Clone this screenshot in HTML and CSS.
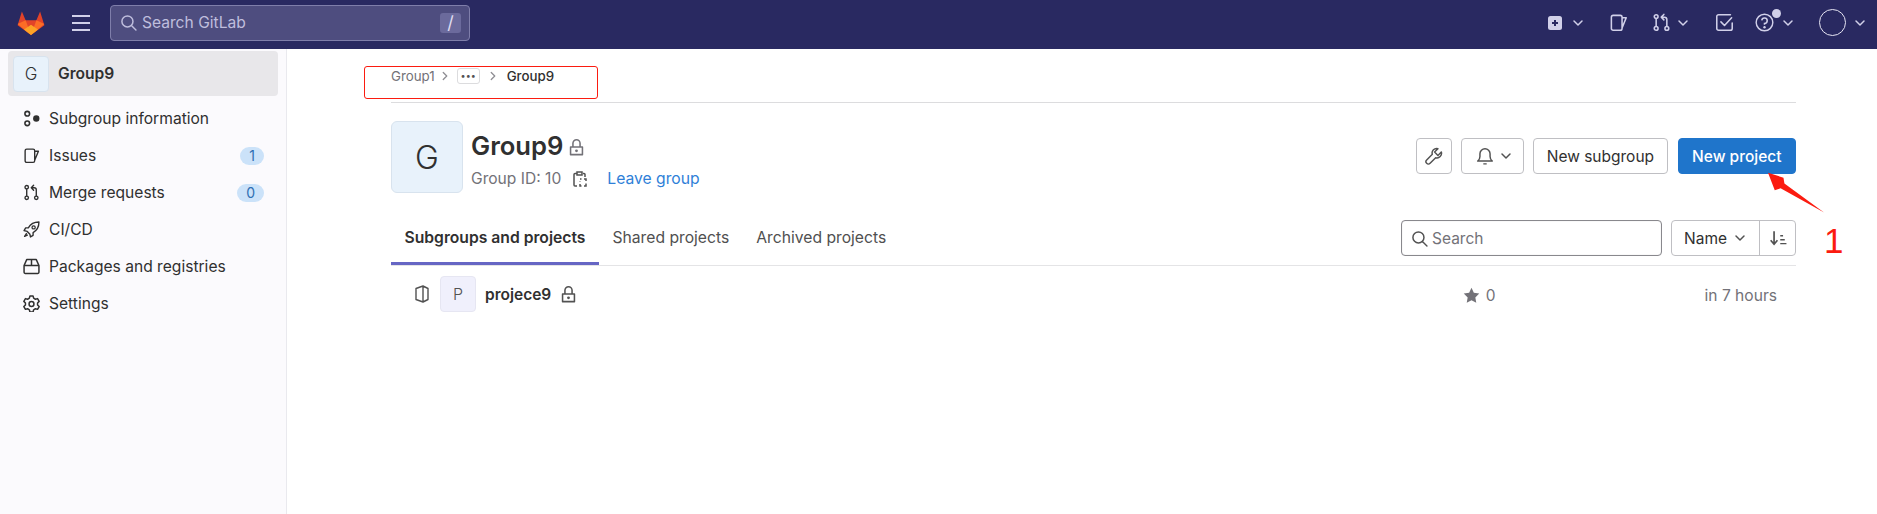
FILE: index.html
```html
<!DOCTYPE html>
<html lang="en">
<head>
<meta charset="utf-8">
<title>Group9</title>
<link rel="stylesheet" href="styles.css">
</head>
<body>
<svg class="defs" width="0" height="0" aria-hidden="true">
  <symbol id="chev" viewBox="0 0 16 16"><path d="M4 6l4 4 4-4" fill="none" stroke="currentColor" stroke-width="1.5" stroke-linecap="round" stroke-linejoin="round"/></symbol>
  <symbol id="issue" viewBox="0 0 16 16"><path d="M2 3.500A1.500 1.500 0 0 1 3.500 2h6A1.500 1.500 0 0 1 11 3.500V13a1.500 1.500 0 0 1-1.500 1.500h-6A1.500 1.500 0 0 1 2 13zM11 4h3.500L11 12.500" fill="none" stroke="currentColor" stroke-width="1.300" stroke-linejoin="round"/></symbol>
  <symbol id="merge" viewBox="0 0 16 16"><g fill="none" stroke="currentColor" stroke-width="1.300" stroke-linecap="round" stroke-linejoin="round"><circle cx="3.500" cy="3" r="1.600"/><circle cx="3.500" cy="13" r="1.600"/><circle cx="12.500" cy="13" r="1.600"/><path d="M3.500 5v6M12.500 11V5.500A2 2 0 0 0 10.500 3.500H8M10 1.200L7.800 3.500 10 5.800"/></g></symbol>
  <symbol id="lock" viewBox="0 0 16 16"><path d="M3 7.500h10v6.500H3zM5 7.500V4.500a3 3 0 0 1 6 0v3" fill="none" stroke="currentColor" stroke-width="1.300" stroke-linejoin="round"/><circle cx="8" cy="10.800" r="1.200" fill="currentColor"/></symbol>
  <symbol id="search" viewBox="0 0 16 16"><circle cx="7" cy="7" r="5.200" fill="none" stroke="currentColor" stroke-width="1.400"/><path d="M11 11l4 4" stroke="currentColor" stroke-width="1.400" stroke-linecap="round"/></symbol>
</svg>

<header class="topbar">
  <svg class="logo" viewBox="0 0 30 28" aria-label="GitLab">
    <path d="M15 27L.6 16.500 5.200 1.500 9.200 11h11.600L24.800 1.500 29.400 16.500z" fill="#e24329"/>
    <path d="M0.600 15.200L9.200 11 15 27z" fill="#fc6d26"/>
    <path d="M29.400 15.200L20.800 11 15 27z" fill="#fc6d26"/>
    <path d="M7.500 21L15 16l7.500 5L15 27z" fill="#fca326"/>
  </svg>
  <span class="burger"><i></i><i></i><i></i></span>
  <div class="globalsearch">
    <svg class="ic16"><use href="#search"/></svg>
    <span class="gs-text">Search GitLab</span>
    <kbd class="slash">/</kbd>
  </div>
  <nav class="topnav">
    <span class="tn tn-plus">
      <svg class="ic14" viewBox="0 0 14 14"><rect width="14" height="14" rx="2.500" fill="#d1d0e9"/><path d="M7 4v6M4 7h6" stroke="#292961" stroke-width="2"/></svg>
      <svg class="ic16"><use href="#chev"/></svg>
    </span>
    <span class="tn tn-issue"><svg class="ic16b"><use href="#issue"/></svg></span>
    <span class="tn tn-merge"><svg class="ic16b"><use href="#merge"/></svg><svg class="ic16"><use href="#chev"/></svg></span>
    <span class="tn tn-todo">
      <svg class="ic16b" viewBox="0 0 16 16"><path d="M14.500 8.500V13A1.500 1.500 0 0 1 13 14.500H3A1.500 1.500 0 0 1 1.500 13V3A1.500 1.500 0 0 1 3 1.500h10M5 7.500l3 3 6-6.500" fill="none" stroke="currentColor" stroke-width="1.300" stroke-linecap="round" stroke-linejoin="round"/></svg>
    </span>
    <span class="tn tn-help">
      <svg class="ic16b" viewBox="0 0 16 16"><circle cx="8" cy="8" r="7" fill="none" stroke="currentColor" stroke-width="1.200"/><path d="M5.700 6.200A2.300 2.300 0 1 1 8 8.800V9.800" fill="none" stroke="currentColor" stroke-width="1.300"/><circle cx="8" cy="12" r="1" fill="currentColor"/></svg>
      <i class="help-dot"></i>
      <svg class="ic16"><use href="#chev"/></svg>
    </span>
    <span class="tn tn-user"><i class="user-ring"></i><svg class="ic16"><use href="#chev"/></svg></span>
  </nav>
</header>

<div class="shell">
  <aside class="sidebar">
    <div class="ctx"><span class="ctx-av">G</span><strong>Group9</strong></div>
    <a class="sb"><svg class="sbi" viewBox="0 0 16 16"><g fill="none" stroke="currentColor" stroke-width="1.500"><circle cx="4" cy="3.500" r="2.200"/><circle cx="4" cy="12.500" r="2.200"/></g><circle cx="12.500" cy="8" r="3" fill="currentColor"/></svg><span class="sb-l">Subgroup information</span></a>
    <a class="sb"><svg class="sbi"><use href="#issue"/></svg><span class="sb-l">Issues</span><em class="pill">1</em></a>
    <a class="sb"><svg class="sbi"><use href="#merge"/></svg><span class="sb-l">Merge requests</span><em class="pill">0</em></a>
    <a class="sb"><svg class="sbi" viewBox="0 0 16 16"><path d="M15 1C10.500 1 7 3 5 6.500H2.500L1 9l3 .8L6.500 12.500 7 15l2.500-1.500V11C13 9 15 5.500 15 1zM3.500 11.500L1.500 14.500 4.500 13" fill="none" stroke="currentColor" stroke-width="1.300" stroke-linejoin="round"/><circle cx="10" cy="6" r="1.500" fill="none" stroke="currentColor" stroke-width="1.200"/></svg><span class="sb-l">CI/CD</span></a>
    <a class="sb"><svg class="sbi" viewBox="0 0 16 16"><path d="M1 7L3.500 1.500h9L15 7v6.500A1 1 0 0 1 14 14.500H2A1 1 0 0 1 1 13.500zM1 7h14M8 1.500V7" fill="none" stroke="currentColor" stroke-width="1.400" stroke-linejoin="round"/></svg><span class="sb-l">Packages and registries</span></a>
    <a class="sb"><svg class="sbi" viewBox="0 0 16 16"><path d="M6.500 1h3l.5 2 1.700 1 2-.6 1.500 2.600-1.500 1.500v1.900l1.500 1.500-1.500 2.600-2-.6-1.700 1-.5 2h-3l-.5-2-1.700-1-2 .6L.8 10.900l1.500-1.500V7.500L.8 6l1.500-2.600 2 .6 1.700-1z" fill="none" stroke="currentColor" stroke-width="1.400" stroke-linejoin="round"/><circle cx="8" cy="8.500" r="2.300" fill="none" stroke="currentColor" stroke-width="1.400"/></svg><span class="sb-l">Settings</span></a>
  </aside>

  <main class="content">
    <nav class="crumbs">
      <span class="c-link">Group1</span>
      <svg class="c-sep"><use href="#chev"/></svg>
      <span class="c-more">•••</span>
      <svg class="c-sep c-sep2"><use href="#chev"/></svg>
      <strong class="c-cur">Group9</strong>
    </nav>

    <section class="grouphead">
      <div class="g-av">G</div>
      <div class="g-info">
        <h1 class="g-title">Group9 <svg class="ic-lock"><use href="#lock"/></svg></h1>
        <div class="g-sub">
          <span>Group ID: 10</span>
          <svg class="clip" viewBox="0 0 16 16"><path d="M5 2.500H3A1 1 0 0 0 2 3.500V14a1 1 0 0 0 1 1h2M11 2.500h1A1 1 0 0 1 13 3.500V6M5 1h5v3H5zM8 8h1.500M12 8h2v2M14 12.500V15h-2M9.500 15H8v-2M8 10.500V10" fill="none" stroke="currentColor" stroke-width="1.500"/></svg>
          <a class="leave">Leave group</a>
        </div>
      </div>
      <div class="g-actions">
        <span class="btn btn-icon"><svg class="ic16a" viewBox="0 0 16 16"><path d="M14.500 4.500L11.500 7.500 8.500 4.500 11.500 1.500A4 4 0 0 0 6.500 6.500L1.500 11.500A2 2 0 0 0 4.500 14.500L9.500 9.500A4 4 0 0 0 14.500 4.500z" fill="none" stroke="currentColor" stroke-width="1.300" stroke-linejoin="round"/></svg></span>
        <span class="btn btn-bell"><svg class="ic16a" viewBox="0 0 16 16"><path d="M1.500 12.500h13c-1.500-1-2-2-2-4V6a4.500 4.500 0 0 0-9 0v2.500c0 2-.5 3-2 4zM6.500 15h3" fill="none" stroke="currentColor" stroke-width="1.300" stroke-linejoin="round"/></svg><svg class="ic16"><use href="#chev"/></svg></span>
        <span class="btn btn-sub">New subgroup</span>
        <span class="btn btn-primary">New project</span>
      </div>
    </section>

    <section class="tabsbar">
      <div class="tabs">
        <span class="tab tab-on">Subgroups and projects</span>
        <span class="tab">Shared projects</span>
        <span class="tab">Archived projects</span>
      </div>
      <div class="filter">
        <div class="f-search"><svg class="ic16"><use href="#search"/></svg><span>Search</span></div>
        <div class="sorter">
          <span class="s-name">Name <svg class="ic16"><use href="#chev"/></svg></span>
          <span class="s-dir"><svg class="ic16a" viewBox="0 0 16 16"><path d="M4.500 2v11M1.500 10l3 3.500 3-3.500" fill="none" stroke="currentColor" stroke-width="1.500"/><path d="M10 6h2.500M10 9.500h4M10 13h5.500" stroke="currentColor" stroke-width="1.300"/></svg></span>
        </div>
      </div>
    </section>

    <section class="row">
      <svg class="r-proj" viewBox="0 0 14 18"><path d="M1 3.500L8 1l5 2.500v11L8 17l-7-2.500zM8 1v16" fill="none" stroke="currentColor" stroke-width="1.400" stroke-linejoin="round"/></svg>
      <span class="r-av">P</span>
      <strong class="r-name">projece9</strong>
      <svg class="ic-lock r-lock"><use href="#lock"/></svg>
      <span class="r-star">
        <svg class="ic16a" viewBox="0 0 16 16"><path d="M8 .8l2.200 4.700 5.100.7-3.700 3.600.9 5.100L8 12.500l-4.500 2.400.9-5.100L.7 6.200l5.100-.7z" fill="currentColor"/></svg>
        0
      </span>
      <span class="r-time">in 7 hours</span>
    </section>
  </main>
</div>

<div class="mark-box"></div>
<svg class="mark-arrow" viewBox="0 0 60 50"><path d="M0 0L16 5 17 11 58 41 13 16 7 18z" fill="#fb1b10"/></svg>
<span class="mark-num">1</span>
</body>
</html>
```

FILE: styles.css
```css
* { box-sizing: border-box; }
html, body { height: 100%; }
body {
  margin: 0;
  font-family: Inter, "Noto Sans", sans-serif;
  font-size: 16px;
  color: #303030;
  background: #fff;
  overflow: hidden;
  position: relative;
}
.defs { position: absolute; }
a { text-decoration: none; }
em { font-style: normal; }

.ic16, .ic16a, .ic16b, .ic-lock, .ic14 { flex: none; display: block; }
.ic16 { width: 16px; height: 16px; }
.ic16a { width: 18px; height: 18px; }
.ic16b { width: 19px; height: 19px; }
.ic-lock { width: 19px; height: 19px; }
.ic14 { width: 14px; height: 14px; }

/* top bar */
.topbar {
  height: 49px;
  background: #292961;
  display: flex;
  align-items: center;
  padding: 0 0 4px 17px;
  color: #d1d0e9;
}
.logo { width: 28px; height: 26px; flex: none; }
.burger {
  display: flex;
  flex-direction: column;
  gap: 5px;
  width: 18px;
  margin-left: 27px;
}
.burger i { display: block; height: 2px; background: #d1d0e9; }
.globalsearch {
  margin-left: 20px;
  width: 360px;
  height: 36px;
  display: flex;
  align-items: center;
  background: #4e4d7f;
  border: 1px solid #7f7eaa;
  border-radius: 4px;
  padding: 0 8px 0 9px;
  color: #bfbedd;
}
.globalsearch .ic16 { width: 17px; height: 17px; }
.gs-text { margin-left: 5px; font-size: 15.600px; flex: 1; }
.slash {
  width: 21px;
  height: 20px;
  background: #6b6a9c;
  border-radius: 3px;
  text-align: center;
  font: 18px/20px Inter, sans-serif;
  color: #dedcf0;
}
.topnav { margin-left: auto; display: flex; align-items: center; padding-right: 9px; }
.tn { display: flex; align-items: center; position: relative; }
.tn-plus { gap: 8px; margin-right: 23px; }
.tn-issue { margin-right: 24px; }
.tn-merge { gap: 4px; margin-right: 24px; }
.tn-todo { margin-right: 21px; }
.tn-help { gap: 6px; margin-right: 23px; }
.tn-user { gap: 6px; }
.help-dot {
  position: absolute;
  left: 17px;
  top: -4px;
  width: 9px;
  height: 9px;
  border-radius: 50%;
  background: #d1d0e9;
}
.user-ring {
  width: 27px;
  height: 27px;
  border-radius: 50%;
  border: 1px solid #e6e5f3;
  display: block;
}

/* shell */
.shell { display: flex; height: 465px; }
.sidebar {
  width: 287px;
  flex: none;
  background: #fbfafd;
  border-right: 1px solid #e9e9ee;
  padding: 2px 8px 0;
}
.ctx {
  height: 45px;
  background: #e8e7ea;
  border-radius: 4px;
  display: flex;
  align-items: center;
  padding-left: 5px;
  margin-bottom: 4px;
  font-size: 15.600px;
}
.ctx strong { margin-left: 9px; font-weight: 600; }
.ctx-av {
  width: 36px;
  height: 36px;
  background: #e8f2fb;
  border: 1px solid #d8e3ee;
  border-radius: 4px;
  display: flex;
  align-items: center;
  justify-content: center;
  font-size: 17px;
  font-weight: 300;
}
.sb {
  height: 37px;
  display: flex;
  align-items: center;
  padding-left: 15px;
  color: #303030;
  font-size: 15.600px;
}
.sbi { width: 17px; height: 17px; flex: none; color: #303030; }
.sb-l { margin-left: 9px; flex: 1; }
.pill {
  height: 18px;
  padding: 0 9px;
  margin-right: 14px;
  border-radius: 9px;
  background: #cbe2f9;
  color: #2f6fb3;
  font-size: 14px;
  line-height: 18px;
  text-align: center;
}

/* main */
.content { width: 1405px; margin-left: 104px; }
.crumbs {
  height: 54px;
  border-bottom: 1px solid #dcdcde;
  display: flex;
  align-items: flex-start;
  padding-top: 19px;
  font-size: 13.300px;
  line-height: 16px;
  color: #737278;
}
.c-sep { width: 14px; height: 14px; transform: rotate(-90deg); margin: 1px 0 0 3px; color: #8f8e94; }
.c-more {
  width: 23px;
  height: 16px;
  margin-left: 5px;
  border: 1px solid #dcdcde;
  border-radius: 3px;
  font-size: 9px;
  line-height: 13px;
  text-align: center;
  color: #525252;
}
.c-sep2 { margin-left: 6px; }
.c-cur { margin-left: 7px; color: #303030; font-weight: 500; }

.grouphead { display: flex; padding-top: 18px; height: 116px; }
.g-av {
  width: 72px;
  height: 72px;
  background: #e8f2fb;
  border: 1px solid #d8e3ee;
  border-radius: 6px;
  display: flex;
  align-items: center;
  justify-content: center;
  font-size: 32px;
  font-weight: 300;
}
.g-info { margin-left: 8px; }
.g-title {
  margin: 9px 0 0;
  font-size: 25.600px;
  line-height: 31px;
  font-weight: 600;
  display: flex;
  align-items: center;
  gap: 4px;
}
.g-title .ic-lock { color: #737278; margin-top: 3px; }
.g-sub {
  display: flex;
  align-items: center;
  margin-top: 8px;
  color: #737278;
  font-size: 15.600px;
  line-height: 20px;
}
.clip { width: 16px; height: 16px; margin-left: 11px; color: #525252; }
.leave { margin-left: 19px; color: #2f7fd8; font-size: 15.700px; }
.g-actions { margin-left: auto; margin-top: 17px; display: flex; gap: 9px; align-self: flex-start; }
.btn {
  height: 36px;
  padding: 0 13px;
  background: #fff;
  border: 1px solid #bfbfc3;
  border-radius: 4px;
  display: flex;
  align-items: center;
  font-size: 15.500px;
  color: #303030;
}
.btn-icon { width: 36px; padding: 0; justify-content: center; color: #525252; }
.btn-bell { width: 63px; padding: 0 0 0 14px; gap: 4px; color: #525252; }
.btn-sub { padding: 0 12.500px; }
.btn-primary {
  background: #1f75cb;
  border-color: #1f75cb;
  color: #fff;
  font-weight: 500;
  margin-left: 1px;
  padding: 0 13.500px;
}

.tabsbar {
  height: 47px;
  border-bottom: 1px solid #e4e4e6;
  display: flex;
  justify-content: space-between;
}
.tabs { display: flex; }
.tab {
  height: 46px;
  padding: 0 13.500px;
  line-height: 38px;
  font-size: 15.700px;
  color: #505050;
}
.tab-on {
  color: #303030;
  font-weight: 600;
  border-bottom: 3px solid #6666c4;
}
.filter { display: flex; gap: 9px; margin-top: 1px; }
.f-search {
  width: 261px;
  height: 36px;
  border: 1px solid #89888d;
  border-radius: 4px;
  box-shadow: inset 0 0 1px #bfbfc3;
  display: flex;
  align-items: center;
  padding-left: 9px;
  gap: 4px;
  font-size: 15.500px;
  color: #737278;
}
.f-search .ic16 { width: 17px; height: 17px; color: #525252; }
.sorter {
  width: 125px;
  height: 36px;
  border: 1px solid #bfbfc3;
  border-radius: 4px;
  display: flex;
}
.s-name {
  flex: 1;
  display: flex;
  align-items: center;
  gap: 5px;
  padding-left: 12px;
  font-size: 15.500px;
  border-right: 1px solid #bfbfc3;
}
.s-name .ic16 { color: #525252; }
.s-dir { width: 35px; display: flex; align-items: center; justify-content: center; color: #525252; }

.row {
  display: flex;
  align-items: center;
  padding: 10px 19px 0 24px;
  height: 46px;
}
.r-proj { width: 14px; height: 18px; flex: none; color: #525252; }
.r-av {
  width: 36px;
  height: 36px;
  margin-left: 11px;
  background: #f0f0fc;
  border: 1px solid #e6e6f2;
  border-radius: 4px;
  display: flex;
  align-items: center;
  justify-content: center;
  font-size: 16px;
  font-weight: 300;
  color: #525252;
}
.r-name { margin-left: 9px; font-size: 15.500px; font-weight: 600; color: #303030; }
.r-lock { margin-left: 8px; color: #525252; }
.r-star {
  margin-left: auto;
  margin-top: 2px;
  display: flex;
  align-items: center;
  gap: 6px;
  font-size: 15.500px;
  color: #737278;
}
.r-star .ic16a { width: 17px; height: 17px; }
.r-time { margin-left: 209px; margin-top: 2px; color: #737278; font-size: 15.600px; }

/* screenshot annotations */
.mark-box {
  position: absolute;
  left: 364px;
  top: 66px;
  width: 234px;
  height: 33px;
  border: 1px solid #fb1b10;
  border-radius: 3px;
}
.mark-arrow {
  position: absolute;
  left: 1768px;
  top: 172px;
  width: 58px;
  height: 50px;
}
.mark-num {
  position: absolute;
  left: 1824px;
  top: 221px;
  font: 35px/40px "Liberation Sans", sans-serif;
  color: #fb1b10;
}
```
